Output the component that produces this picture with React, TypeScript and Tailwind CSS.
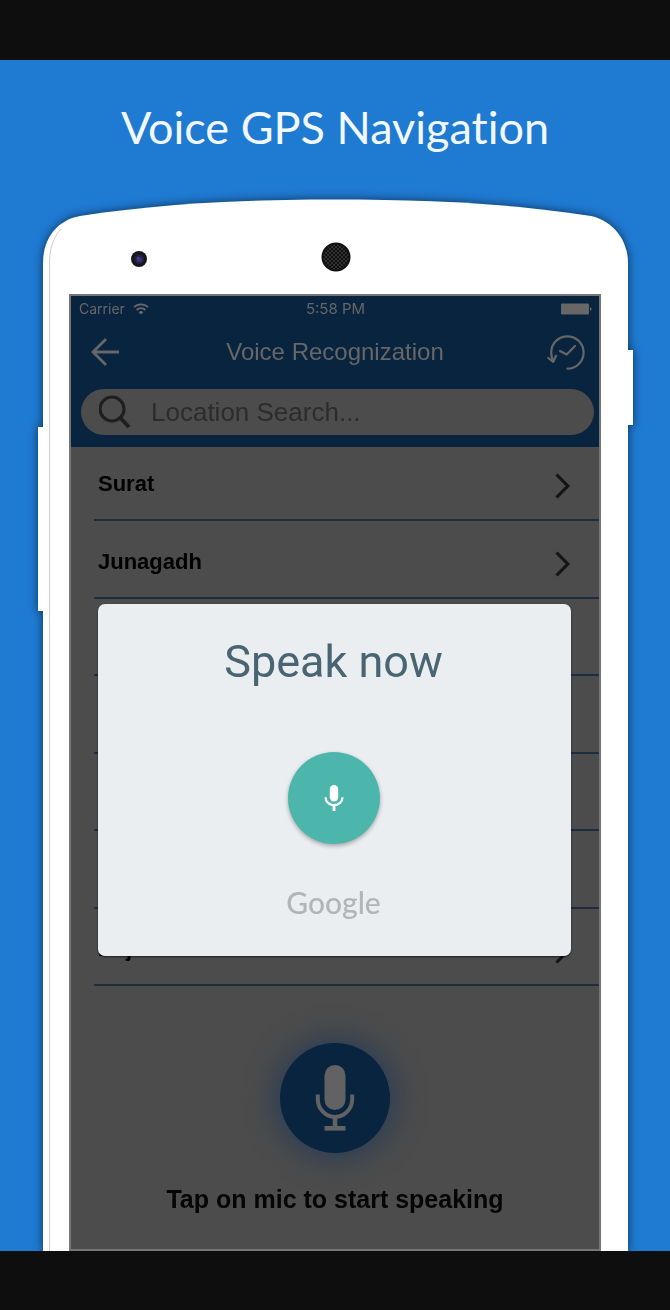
type City = { name: string };

const cities: City[] = [
  { name: "Surat" },
  { name: "Junagadh" },
  { name: "" },
  { name: "" },
  { name: "" },
  { name: "" },
  { name: "Rajkot" },
];

function WifiIcon() {
  return (
    <svg viewBox="0 0 16 12" className="h-3 w-4" fill="none" stroke="currentColor" aria-hidden="true">
      <path d="M1 4.2A10 10 0 0 1 15 4.2" strokeWidth="1.8" />
      <path d="M3.6 7A6.2 6.2 0 0 1 12.4 7" strokeWidth="1.8" />
      <path d="M8 11.6 5.6 9.2a3.4 3.4 0 0 1 4.8 0z" fill="currentColor" stroke="none" />
    </svg>
  );
}

function BatteryIcon() {
  return (
    <svg viewBox="0 0 31 12" className="h-3 w-[31px]" fill="currentColor" aria-hidden="true">
      <rect x="0" y="0.5" width="28" height="11" rx="1" />
      <path d="M29 4.2c1 .2 1.6.9 1.6 1.8S30 7.6 29 7.8z" />
    </svg>
  );
}

function BackIcon() {
  return (
    <svg viewBox="0 0 28 28" className="size-7" fill="none" stroke="currentColor" strokeWidth="2.8" aria-hidden="true">
      <path d="M28 14H2M15 1 2 14l13 13" />
    </svg>
  );
}

function HistoryIcon() {
  return (
    <svg viewBox="0 0 38 36" className="h-9 w-[38px]" fill="none" stroke="currentColor" strokeWidth="2.2" strokeLinecap="round" strokeLinejoin="round" aria-hidden="true">
      <path d="M6 27C4.600 23.500 4.200 21 4.200 18.500A16.200 16.200 0 1 1 20.400 34.700" />
      <path d="M1.300 24 6.200 27.800 9 21.700" />
      <path d="M13 17 19.700 20.400 28 12" />
    </svg>
  );
}

function SearchIcon() {
  return (
    <svg viewBox="0 0 32 34" className="h-[34px] w-8 shrink-0" fill="none" stroke="currentColor" aria-hidden="true">
      <circle cx="13" cy="14" r="12" strokeWidth="3.2" />
      <path d="m21.500 23 8.500 9" strokeWidth="4" />
    </svg>
  );
}

function ChevronIcon() {
  return (
    <svg viewBox="0 0 16 26" className="h-[26px] w-4" fill="none" stroke="currentColor" strokeWidth="3.2" aria-hidden="true">
      <path d="M1.500 1.500 12.800 13 1.500 24.500" />
    </svg>
  );
}

function LargeMicIcon() {
  return (
    <svg viewBox="0 0 40 68" className="h-[68px] w-10" fill="currentColor" aria-hidden="true">
      <rect x="9.5" y="1" width="21" height="45" rx="10.5" />
      <path d="M2.800 30.500V35a17.200 18 0 0 0 34.400 0v-4.500" fill="none" stroke="currentColor" strokeWidth="4" />
      <rect x="17.7" y="52" width="4.6" height="12" />
      <rect x="9.5" y="62" width="21" height="4.6" />
    </svg>
  );
}

function SmallMicIcon() {
  return (
    <svg viewBox="0 0 20 28" className="h-7 w-5" fill="currentColor" aria-hidden="true">
      <rect x="5.8" y="1" width="8.4" height="16.5" rx="4.2" />
      <path d="M1.500 13.200a8.500 8 0 0 0 17 0" fill="none" stroke="currentColor" strokeWidth="2.2" />
      <rect x="8.6" y="21" width="2.8" height="6" />
    </svg>
  );
}

function SpeakerGrille() {
  return (
    <svg viewBox="0 0 30 30" className="size-[30px]" aria-hidden="true">
      <defs>
        <pattern id="mesh" width="4" height="4" patternUnits="userSpaceOnUse">
          <rect width="4" height="4" fill="#303030" />
          <circle cx="1" cy="1" r="1.1" fill="#0b0b0b" />
          <circle cx="3" cy="3" r="1.1" fill="#0b0b0b" />
        </pattern>
      </defs>
      <circle cx="15" cy="15" r="14.5" fill="#101010" />
      <circle cx="15" cy="15" r="12.5" fill="url(#mesh)" />
    </svg>
  );
}

function CameraLens() {
  return (
    <svg viewBox="0 0 16 16" className="size-4" aria-hidden="true">
      <circle cx="8" cy="8" r="8" fill="#17171a" />
      <circle cx="8.3" cy="8.2" r="4.8" fill="#25204a" />
      <circle cx="8.3" cy="8.4" r="2.6" fill="#3b3273" />
      <circle cx="7" cy="7" r="0.8" fill="#5a5490" />
    </svg>
  );
}

function PhoneTop() {
  return (
    <div className="relative h-[95px]">
      <svg viewBox="0 0 585 95" preserveAspectRatio="none" className="block h-full w-full" aria-hidden="true">
        <path d="M0 95V64C0 38 15 21 37 17C120 4 205 0.5 292 0.5C380 0.5 465 4 548 17C570 22 585 41 585 64V95Z" fill="#fff" />
        <path d="M6.5 95V64C6.5 50 10 39 18 30" fill="none" stroke="#c9ced2" strokeWidth="1" />
      </svg>
      <div className="absolute top-[52px] left-[15%]">
        <CameraLens />
      </div>
      <div className="absolute inset-x-0 top-[43px] flex justify-center">
        <SpeakerGrille />
      </div>
    </div>
  );
}

function ScreenHeader() {
  return (
    <header className="bg-[#09243f] pb-3 text-[#676767]">
      <div className="grid h-[26px] grid-cols-3 items-center pr-[7px] pl-2 font-['Inter',sans-serif] text-[14px] leading-5">
        <div className="flex items-center gap-2">
          <span>Carrier</span>
          <WifiIcon />
        </div>
        <span className="text-center text-[15px]">5:58 PM</span>
        <div className="flex justify-end">
          <BatteryIcon />
        </div>
      </div>
      <div className="grid h-[60px] grid-cols-[1fr_auto_1fr] items-center px-[14px]">
        <button type="button" aria-label="Back" className="justify-self-start pl-1.5">
          <BackIcon />
        </button>
        <h2 className="text-2xl">Voice Recognization</h2>
        <button type="button" aria-label="History" className="justify-self-end">
          <HistoryIcon />
        </button>
      </div>
      <label className="mt-[7px] mr-[5px] ml-[10px] flex h-[46px] items-center gap-5 rounded-full bg-[#4c4c4c] pl-[18px] text-[#1f1f1f]">
        <SearchIcon />
        <input
          type="text"
          aria-label="Location Search"
          placeholder="Location Search..."
          className="min-w-0 flex-1 bg-transparent text-[26px] leading-8 outline-none placeholder:text-[#2c2c2c]"
        />
      </label>
    </header>
  );
}

function CityList() {
  return (
    <ul className="pl-[23px]">
      {cities.map((city, index) => (
        <li key={index} className="h-[77px] border-b-2 border-[#1e2c40] first:h-[74px] even:h-[78px]">
          <button type="button" aria-label={city.name || undefined} className="flex h-full w-full items-end justify-between pr-7 pb-5 pl-1 text-left text-black">
            <span className="text-[22px] leading-[30px] font-bold">{city.name}</span>
            <span className="text-[#151515]">
              <ChevronIcon />
            </span>
          </button>
        </li>
      ))}
    </ul>
  );
}

function SpeakDialog() {
  return (
    <section
      role="dialog"
      aria-label="Speak now"
      className="absolute top-[308px] right-[28px] left-[27px] flex flex-col items-center rounded-[7px] bg-[#eaeef1] pt-7 pr-0.5 pb-8 shadow-[0_1px_2px_rgba(0,0,0,0.6)]"
    >
      <h3 className="font-['Roboto',sans-serif] text-[45px] leading-[60px] text-[#4a6572]">Speak now</h3>
      <button
        type="button"
        aria-label="Listening"
        className="mt-[60px] flex size-[92px] items-center justify-center rounded-full bg-[#4db6ac] text-white shadow-[0_2px_4px_rgba(0,0,0,0.3)]"
      >
        <SmallMicIcon />
      </button>
      <p className="mt-[37px] mb-px font-['Lato',sans-serif] text-[30px] leading-[42px] font-medium text-[#b1b5b7]">Google</p>
    </section>
  );
}

export default function App() {
  return (
    <div className="flex min-h-screen flex-col bg-[#0e0e0e] pt-[60px] pb-[59px] font-['Liberation_Sans',Arial,sans-serif]">
      <main className="flex-1 overflow-hidden bg-[#1f7ad2] pt-[37px]">
        <h1 className="text-center font-['Lato','Noto_Sans',sans-serif] text-[45px] leading-[60px] text-[#f2f8ff] [font-variant-ligatures:none]">
          Voice GPS Navigation
        </h1>
        <div className="relative mt-[42px] mr-[42px] ml-[43px] drop-shadow-[0_0_5px_rgba(0,0,0,0.6)]">
          <div className="absolute top-[228px] -left-[5px] h-[184px] w-[6px] bg-white" />
          <div className="absolute top-[151px] -right-[5px] h-[75px] w-[6px] bg-white" />
          <PhoneTop />
          <div className="bg-white pl-[6px]">
            <div className="border-l border-[#c9ced2] pr-[27px] pl-[19px]">
              <div className="relative border-2 border-[#747678] bg-[#4c4c4c]">
                <ScreenHeader />
                <CityList />
                <div className="flex flex-col items-center pt-[57px] pb-[34px]">
                  <button
                    type="button"
                    aria-label="Start speaking"
                    className="flex size-[110px] items-center justify-center rounded-full bg-[#09243f] text-[#626262] shadow-[0_0_28px_6px_rgba(22,52,92,0.6)]"
                  >
                    <LargeMicIcon />
                  </button>
                  <p className="mt-[30px] text-[25px] leading-8 font-bold text-[#050505]">Tap on mic to start speaking</p>
                </div>
                <SpeakDialog />
              </div>
            </div>
          </div>
        </div>
      </main>
    </div>
  );
}
